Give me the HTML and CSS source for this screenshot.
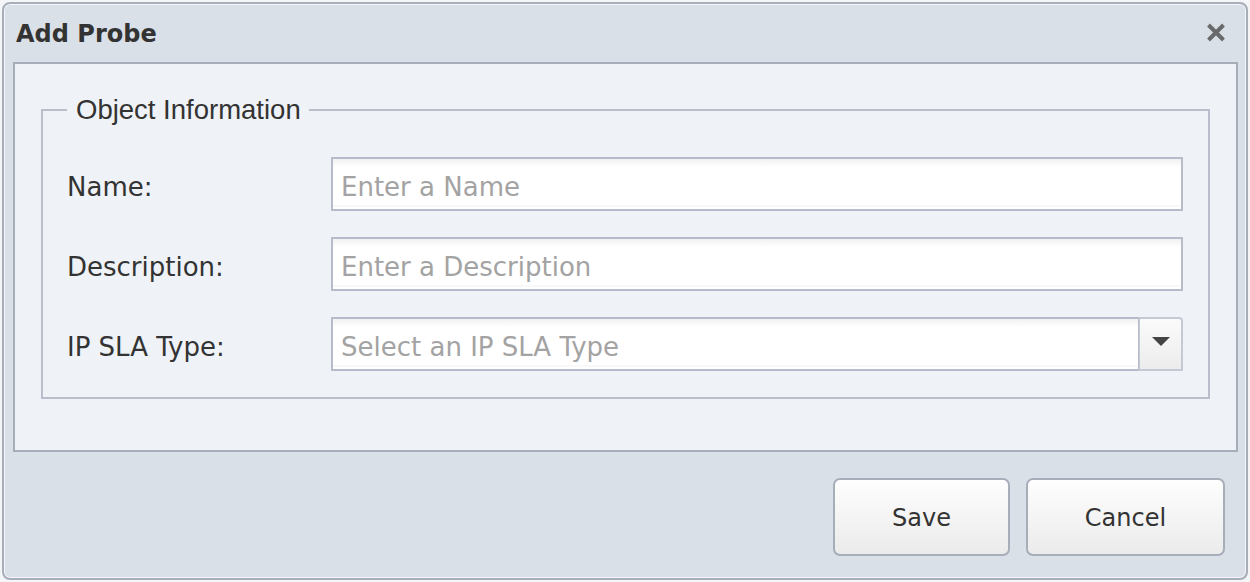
FILE: index.html
```html
<!DOCTYPE html>
<html lang="en">
<head>
  <meta charset="UTF-8">
  <title>Add Probe</title>
  <link rel="stylesheet" href="styles.css">
</head>
<body>
  <div class="dialog">
    <div class="dialog-header">
      <span class="dialog-title">Add Probe</span>
      <button class="close-btn" title="Close">
        <svg width="20" height="19" viewBox="0 0 20 19"><path d="M2.5 2 L17.5 17 M17.5 2 L2.5 17" stroke="#6a6a6a" stroke-width="4" stroke-linecap="butt"/></svg>
      </button>
    </div>

    <div class="dialog-body">
      <fieldset class="group">
        <legend>Object Information</legend>
        <div class="form-row">
          <label>Name:</label>
          <input type="text" class="field" placeholder="Enter a Name">
        </div>
        <div class="form-row">
          <label>Description:</label>
          <input type="text" class="field" placeholder="Enter a Description">
        </div>
        <div class="form-row">
          <label>IP SLA Type:</label>
          <div class="combo">
            <input type="text" class="field combo-input" placeholder="Select an IP SLA Type">
            <span class="combo-arrow">
              <svg width="18" height="9" viewBox="0 0 18 9"><path d="M0 0 H18 L9 9 Z" fill="#444"/></svg>
            </span>
          </div>
        </div>
      </fieldset>
    </div>

    <div class="dialog-footer">
      <button class="btn btn-save">Save</button>
      <button class="btn btn-cancel">Cancel</button>
    </div>
  </div>
</body>
</html>
```

FILE: styles.css
```css
html, body { height: 100%; }
body {
  margin: 0;
  padding: 2px;
  box-sizing: border-box;
  background: #f4f5f7;
  font-family: "DejaVu Sans", sans-serif;
  color: #333;
}
.dialog {
  width: 1246px;
  height: 578px;
  box-sizing: border-box;
  border: 2px solid #a8adba;
  border-radius: 8px;
  box-shadow: inset 0 0 0 1px #f3f5f8;
  background: #dae0e7;
  display: flex;
  flex-direction: column;
}
.dialog-header {
  height: 58px;
  box-sizing: border-box;
  display: flex;
  align-items: center;
  justify-content: space-between;
  padding: 2px 20px 0 12px;
}
.dialog-title {
  font-weight: bold;
  font-size: 24px;
  color: #333;
}
.close-btn {
  border: none;
  background: none;
  padding: 0;
  margin-bottom: 4px;
  cursor: pointer;
  display: flex;
}
.dialog-body {
  margin: 0 8px 0 9px;
  height: 390px;
  box-sizing: border-box;
  border: 2px solid #a8adba;
  background: #eff2f6;
  padding: 30px 26px 0 26px;
}
.group {
  margin: 0;
  border: 2px solid #b9bdcc;
  padding: 31px 25px 26px 24px;
}
.group legend {
  font-family: "Liberation Sans", Arial, sans-serif;
  font-size: 27.5px;
  line-height: 32px;
  color: #333;
  padding: 0 8px 0 9px;
}
.form-row {
  display: grid;
  grid-template-columns: 264px 1fr;
  align-items: center;
  margin-bottom: 26px;
}
.form-row:last-child { margin-bottom: 0; }
.form-row label {
  font-size: 26px;
  color: #333;
  padding-top: 6px;
}
.field {
  height: 54px;
  box-sizing: border-box;
  border: 2px solid #b8bbca;
  background: linear-gradient(#f1f1f1, #ffffff 8px, #ffffff 46px, #f3f3f3 47px, #ffffff 48px);
  font-family: "DejaVu Sans", sans-serif;
  font-size: 26px;
  color: #333;
  padding: 6px 8px 0 8px;
  outline: none;
  width: 100%;
}
.field::placeholder { color: #a3a3a3; }
.combo { display: flex; }
.combo-input { flex: 1; border-right-width: 1px; }
.combo-arrow {
  width: 44px;
  height: 54px;
  box-sizing: border-box;
  border: 2px solid #c5c8d5;
  border-left: 1px solid #c5c8d5;
  border-top-right-radius: 4px;
  background: linear-gradient(#fbfbfb, #ececec);
  display: flex;
  align-items: center;
  justify-content: center;
  padding-bottom: 6px;
}
.dialog-footer {
  flex: 1;
  display: flex;
  justify-content: flex-end;
  align-items: flex-end;
  gap: 16px;
  padding: 0 21px 22px 0;
}
.btn {
  height: 78px;
  box-sizing: border-box;
  border: 2px solid #a8adba;
  border-radius: 7px;
  background: linear-gradient(#fefefe, #ebebeb);
  font-family: "DejaVu Sans", sans-serif;
  font-size: 24px;
  color: #333;
  padding-top: 2px;
  cursor: pointer;
}
.btn-save { width: 177px; }
.btn-cancel { width: 199px; }
```
